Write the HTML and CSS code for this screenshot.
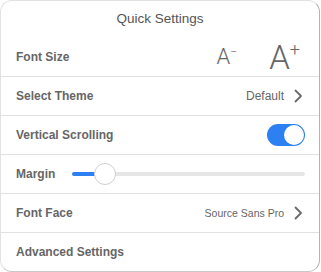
FILE: index.html
```html
<!DOCTYPE html>
<html>
<head>
<meta charset="utf-8">
<link rel="stylesheet" href="styles.css">
</head>
<body>
<div class="card">
  <div class="title">Quick Settings</div>
  <div class="row">
    <span class="label">Font Size</span>
    <div class="sizes">
      <span class="a-small">A<sup>−</sup></span>
      <span class="a-big">A<sup>+</sup></span>
    </div>
  </div>
  <div class="row">
    <span class="label">Select Theme</span>
    <div class="value">Default
      <svg class="chev" width="9" height="14" viewBox="0 0 9 14"><path d="M1.5 1.5 L7 7 L1.5 12.5" fill="none" stroke="#6a6a6a" stroke-width="1.8" stroke-linecap="round" stroke-linejoin="round"/></svg>
    </div>
  </div>
  <div class="row">
    <span class="label">Vertical Scrolling</span>
    <div class="toggle"><div class="knob"></div></div>
  </div>
  <div class="row">
    <span class="label">Margin</span>
    <div class="slider">
      <div class="fill"></div>
      <div class="thumb"></div>
    </div>
  </div>
  <div class="row">
    <span class="label">Font Face</span>
    <div class="value small">Source Sans Pro
      <svg class="chev" width="9" height="14" viewBox="0 0 9 14"><path d="M1.5 1.5 L7 7 L1.5 12.5" fill="none" stroke="#6a6a6a" stroke-width="1.8" stroke-linecap="round" stroke-linejoin="round"/></svg>
    </div>
  </div>
  <div class="row last">
    <span class="label">Advanced Settings</span>
  </div>
</div>
</body>
</html>
```
FILE: styles.css
```css
html, body {
  margin: 0;
  padding: 0;
  background: #ffffff;
}
body {
  font-family: "Liberation Sans", Arial, sans-serif;
  color: #666;
}
.card {
  box-sizing: border-box;
  width: 320px;
  height: 272px;
  background: #fff;
  border: 1px solid #e2e2e2;
  border-right-color: #b4b4b4;
  border-bottom-color: #c8c8c8;
  border-radius: 12px;
  display: flex;
  flex-direction: column;
  overflow: hidden;
}
.title {
  height: 37px;
  box-sizing: border-box;
  padding-bottom: 3px;
  display: flex;
  align-items: center;
  justify-content: center;
  font-size: 13.5px;
  color: #555;
}
.row {
  height: 38px;
  border-bottom: 1px solid #e1e1e1;
  display: flex;
  align-items: center;
  padding: 0 14px 0 15px;
  flex-shrink: 0;
}
.row.last {
  border-bottom: none;
}
.label {
  font-weight: bold;
  font-size: 12px;
  color: #666;
  white-space: nowrap;
}
.sizes {
  margin-left: auto;
  display: flex;
  align-items: center;
  font-family: Roboto, "Liberation Sans", sans-serif;
  font-weight: 300;
  color: #666;
  line-height: 1;
}
.a-small {
  font-size: 22px;
  margin-right: 32px;
}
.a-big {
  font-size: 33px;
  margin-right: 5px;
}
.sizes sup {
  font-size: 0.55em;
  line-height: 0;
  vertical-align: baseline;
  position: relative;
  top: -0.7em;
}
.value {
  margin-left: auto;
  display: flex;
  align-items: center;
  font-size: 12px;
  color: #666;
  margin-right: 2px;
}
.value.small {
  font-size: 10.5px;
}
.chev {
  margin-left: 10px;
}
.toggle {
  margin-left: auto;
  width: 38px;
  height: 22px;
  border-radius: 11px;
  background: #2c80f2;
  display: flex;
  align-items: center;
  justify-content: flex-end;
  padding: 0 1px;
  box-sizing: border-box;
}
.knob {
  width: 20px;
  height: 20px;
  border-radius: 50%;
  background: #fff;
}
.slider {
  margin-left: 17px;
  flex: 1;
  height: 4px;
  border-radius: 2px;
  background: #e6e6e6;
  position: relative;
}
.fill {
  width: 26px;
  height: 4px;
  border-radius: 2px;
  background: #2c80f2;
}
.thumb {
  position: absolute;
  left: 22px;
  top: -9px;
  width: 20px;
  height: 20px;
  border-radius: 50%;
  background: #fff;
  border: 1px solid #cfcfcf;
}
```
